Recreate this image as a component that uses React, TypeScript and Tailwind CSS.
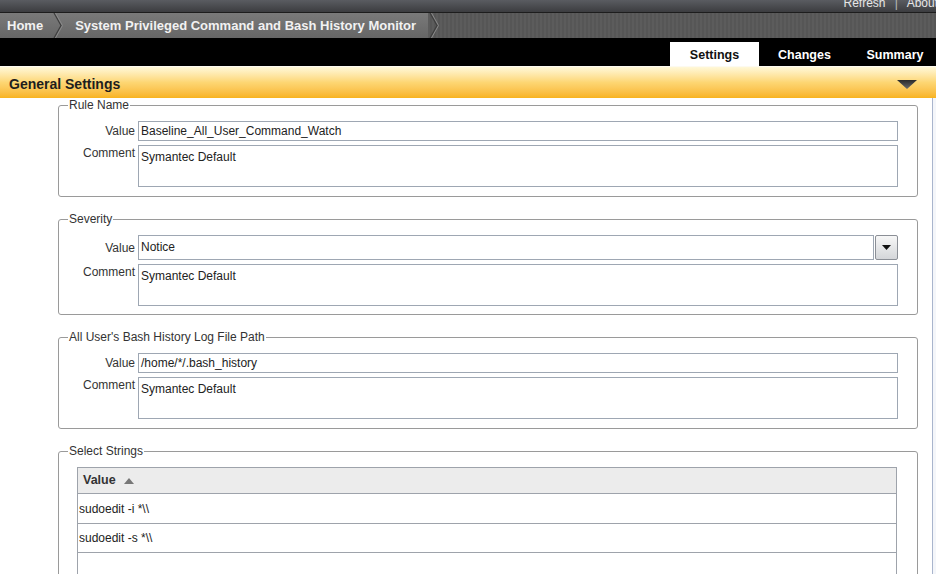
import React from 'react';

const font = { fontFamily: '"Liberation Sans", Arial, sans-serif' };

function Chevron() {
  return (
    <svg width="12" height="25" viewBox="0 0 12 25" className="shrink-0">
      <path d="M2 0 L9 12.5 L2 25" fill="none" stroke="#3e3e3e" strokeWidth="1.2" />
      <path d="M3.5 0 L10.5 12.5 L3.5 25" fill="none" stroke="#8a8a8a" strokeWidth="1" />
    </svg>
  );
}

function TextRow({ label, value }: { label: string; value: string }) {
  return (
    <div className="flex items-center gap-[3px]">
      <div className="w-[66px] text-right text-[12px] text-[#333]">{label}</div>
      <div className="flex-1 h-[20px] border border-[#9ea7b3] bg-white px-[2px] text-[12px] leading-[18px] text-[#222]">
        {value}
      </div>
    </div>
  );
}

function CommentRow({ value }: { value: string }) {
  return (
    <div className="flex items-start gap-[3px]">
      <div className="w-[66px] text-right text-[12px] text-[#333] leading-[16px]">Comment</div>
      <div className="flex-1 h-[42px] border border-[#9ea7b3] bg-white px-[2px] pt-[3px] text-[12px] leading-[16px] text-[#222]">
        {value}
      </div>
    </div>
  );
}

function Group({ title, tight, children }: { title: string; tight?: boolean; children: React.ReactNode }) {
  return (
    <fieldset
      className={
        tight
          ? 'border border-[#9a9a9a] rounded-[3px] pl-[10px] pr-[19px] pb-[8px] mb-[15px]'
          : 'border border-[#9a9a9a] rounded-[3px] pl-[10px] pr-[19px] pb-[9px] mb-[15px]'
      }
    >
      <legend className="ml-[-1px] text-[12px] leading-[14px] text-[#333] px-[1px]">{title}</legend>
      <div className="flex flex-col gap-[4px] pt-[9px]">{children}</div>
    </fieldset>
  );
}

export default function App() {
  return (
    <div className="w-[936px] h-[574px] overflow-hidden bg-white" style={font}>
      {/* top utility bar */}
      <div className="h-[12px] overflow-hidden bg-gradient-to-b from-[#5a5c61] to-[#3c3d40] flex justify-end">
        <div className="-mt-[5px] -mr-[2px] text-[12px] text-[#e6e6e6] whitespace-nowrap leading-[16px]">
          Refresh <span className="mx-[6px] text-[#bbb]">|</span> About
        </div>
      </div>
      <div className="h-[1px] bg-[#1d1d1d]" />

      {/* breadcrumb */}
      <div className="h-[25px] flex items-stretch bg-[repeating-linear-gradient(90deg,#5c5c5c_0px,#5c5c5c_2px,#565656_2px,#565656_4px)]">
        <div className="flex items-stretch bg-gradient-to-b from-[#7a7a7a] to-[#666]">
          <div className="pl-[7px] pr-[9px] flex items-center text-[13px] font-bold text-[#f2f2f2]">Home</div>
          <Chevron />
          <div className="pl-[11px] pr-[12px] flex items-center text-[13px] font-bold text-[#f2f2f2] whitespace-nowrap">
            System Privileged Command and Bash History Monitor
          </div>
        </div>
        <Chevron />
      </div>

      {/* tabs */}
      <div className="h-[28px] bg-black flex justify-end items-end">
        <div className="w-[89px] h-[24px] pt-[2px] bg-white flex items-center justify-center text-[12.5px] font-bold text-[#111]">Settings</div>
        <div className="w-[91px] h-[24px] pt-[2px] flex items-center justify-center text-[12.5px] font-bold text-white">Changes</div>
        <div className="w-[86px] h-[24px] pt-[2px] flex items-center justify-center text-[12.5px] font-bold text-white pl-[4px]">Summary</div>
      </div>

      {/* section header */}
      <div className="h-[32px] pt-[3px] border-t border-[#fdfaf0] bg-gradient-to-b from-[#fff8d8] via-[#fdd672] to-[#f8b31d] flex items-center justify-between pl-[9px] pr-[19px]">
        <span className="text-[14px] font-bold text-[#1e1e1e]">General Settings</span>
        <svg width="20" height="9" viewBox="0 0 20 9">
          <defs>
            <linearGradient id="tri" x1="0" y1="0" x2="0" y2="1">
              <stop offset="0" stopColor="#2a2a2a" />
              <stop offset="1" stopColor="#6a6a6a" />
            </linearGradient>
          </defs>
          <path d="M0 0 H20 L10 9 Z" fill="url(#tri)" />
        </svg>
      </div>

      {/* content */}
      <div className="flex h-[476px]">
        <div className="flex-1 pl-[58px] pr-[14px] overflow-hidden">
          <Group title="Rule Name">
            <TextRow label="Value" value="Baseline_All_User_Command_Watch" />
            <CommentRow value="Symantec Default" />
          </Group>

          <Group title="Severity" tight>
            <div className="flex items-center gap-[3px]">
              <div className="w-[66px] text-right text-[12px] text-[#333]">Value</div>
              <div className="flex-1 flex h-[25px]">
                <div className="flex-1 h-[25px] border border-[#9ea7b3] bg-white px-[2px] text-[12px] leading-[23px] text-[#222]">
                  Notice
                </div>
                <div className="w-[23px] h-[25px] ml-[1px] border border-[#8b8f96] rounded-[2px] bg-gradient-to-b from-[#f7f7f7] to-[#d4d6d9] flex items-center justify-center">
                  <svg width="9" height="5" viewBox="0 0 9 5">
                    <path d="M0 0 H9 L4.5 5 Z" fill="#111" />
                  </svg>
                </div>
              </div>
            </div>
            <CommentRow value="Symantec Default" />
          </Group>

          <Group title="All User's Bash History Log File Path">
            <TextRow label="Value" value="/home/*/.bash_history" />
            <CommentRow value="Symantec Default" />
          </Group>

          <fieldset className="border border-[#9a9a9a] rounded-[3px] pl-[18px] pr-[20px] h-[140px]">
            <legend className="ml-[-9px] text-[12px] leading-[14px] text-[#333] px-[1px]">Select Strings</legend>
            <div className="mt-[9px] border border-[#9ea3ab] border-b-0">
              <div className="h-[26px] bg-[#ececec] border-b border-[#9ea3ab] flex items-center pl-[5px] gap-[8px]">
                <span className="text-[12.5px] font-bold text-[#333]">Value</span>
                <svg width="10" height="6" viewBox="0 0 10 6">
                  <path d="M0 6 H10 L5 0 Z" fill="#777" />
                </svg>
              </div>
              <div className="h-[30px] border-b border-[#9ea3ab] flex items-center pl-[1px] text-[12px] text-[#222]">sudoedit -i *\\</div>
              <div className="h-[29px] border-b border-[#9ea3ab] flex items-center pl-[1px] text-[12px] text-[#222]">sudoedit -s *\\</div>
              <div className="h-[40px]" />
            </div>
          </fieldset>
        </div>
        <div className="w-[4px] border-l border-[#a9b5cd] bg-[#f4f6fa]" />
      </div>
    </div>
  );
}
